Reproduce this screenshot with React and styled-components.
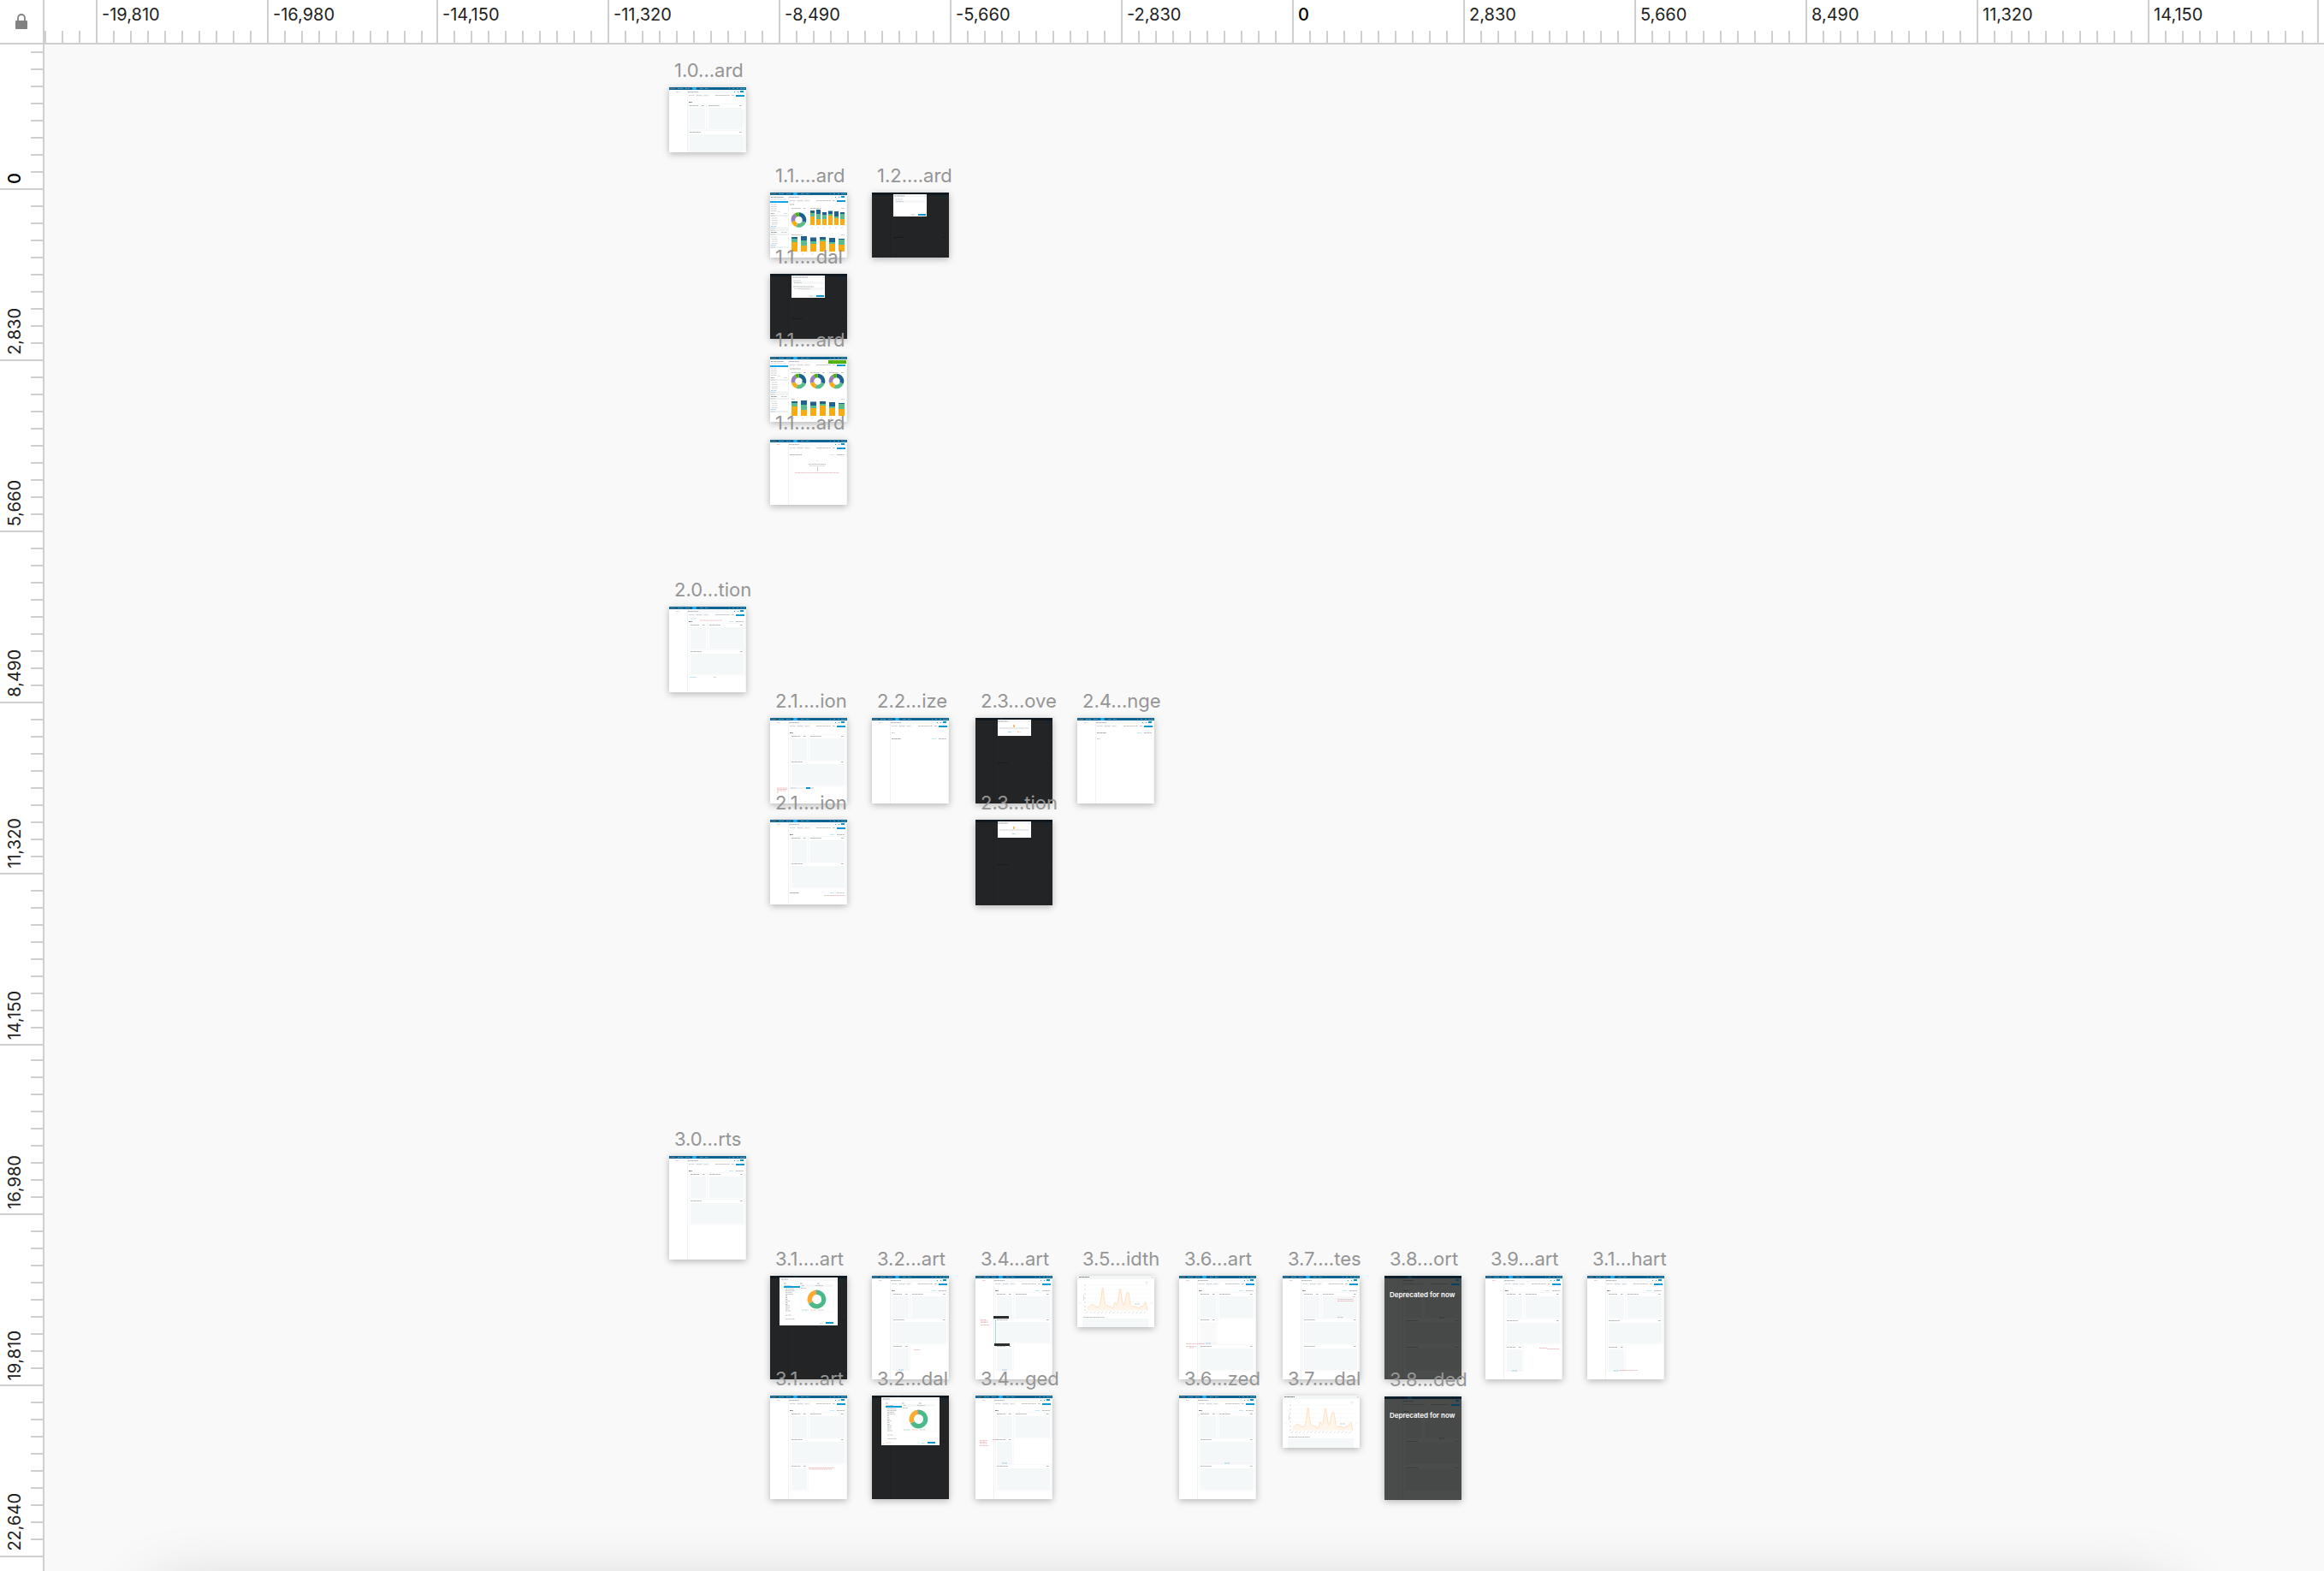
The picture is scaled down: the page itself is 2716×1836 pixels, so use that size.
import React from "react";
import styled, { createGlobalStyle } from "styled-components";

const GlobalStyle = createGlobalStyle`
  * { box-sizing: border-box; }
  body {
    margin: 0;
    background: #f9f9f9;
    font-family: Inter, "Liberation Sans", sans-serif;
  }
`;

const LINE = "#cfcfcf";

const Workspace = styled.div`
  display: grid;
  grid-template: 52px 1fr / 52px 1fr;
  height: 100vh;
  overflow: hidden;
`;

const LockButton = styled.button`
  display: flex;
  align-items: center;
  justify-content: center;
  padding: 0;
  border: 0;
  border-right: 2px solid ${LINE};
  border-bottom: 2px solid ${LINE};
  background: #fff;
  color: #828282;
`;

const RulerTop = styled.div`
  display: flex;
  overflow: hidden;
  background: #fff;
  border-bottom: 2px solid ${LINE};
`;

const RulerLeft = styled.div`
  display: flex;
  flex-direction: column;
  overflow: hidden;
  background: #fff;
  border-right: 2px solid ${LINE};
`;

const Mark = styled.span`
  font-size: 20px;
  line-height: 34px;
  white-space: nowrap;
  color: ${(p) => (p.$origin ? "#000" : "#222")};
  font-weight: ${(p) => (p.$origin ? 500 : 400)};
`;

const TopSegment = styled.div`
  flex: 0 0 ${(p) => p.$size}px;
  padding-left: 7px;
  background:
    linear-gradient(${LINE}, ${LINE}) 0 0 / ${(p) => (p.$major ? 2 : 0)}px 100% no-repeat,
    linear-gradient(to right, ${LINE} 2px, transparent 2px) 0 100% / 20px 14px repeat-x;
`;

const LeftSegment = styled.div`
  flex: 0 0 ${(p) => p.$size}px;
  display: flex;
  align-items: flex-end;
  padding-bottom: 7px;
  background:
    linear-gradient(${LINE}, ${LINE}) 0 100% / 100% 2px no-repeat,
    linear-gradient(to top, ${LINE} 2px, transparent 2px) 100% 100% / 14px 20px repeat-y;
`;

const VerticalMark = styled(Mark)`
  writing-mode: vertical-rl;
  rotate: 180deg;
`;

const Canvas = styled.main`
  position: relative;
  overflow: hidden;
  background: #f9f9f9;
`;

const DockShadow = styled.div`
  position: absolute;
  left: 128px;
  right: 180px;
  top: calc(100% + 24px);
  height: 100px;
  box-shadow: 0 0 80px rgba(0, 0, 0, 0.2);
`;

const Board = styled.figure`
  position: absolute;
  left: ${(p) => p.$x}px;
  top: ${(p) => p.$y}px;
  margin: 0;
  width: 90px;
`;

const BoardName = styled.figcaption`
  padding-left: 6px;
  margin-bottom: 7px;
  font-size: 22px;
  line-height: 26px;
  white-space: nowrap;
  color: #959595;
`;

const Art = styled.div`
  display: grid;
  height: ${(p) => p.$h}px;
  background: ${(p) => p.$fill};
  box-shadow: 0 2px 8px rgba(0, 0, 0, 0.28);
  > * { grid-area: 1 / 1; }
`;

const Notice = styled.strong`
  padding: 17px 0 0 6px;
  font-size: 8px;
  line-height: 10px;
  font-weight: 600;
  white-space: nowrap;
  color: #fff;
`;

/* ---------- miniature artwork ---------- */

/* A line of copy too small to read: a thin broken stroke. */
const Txt = ({ x, y, w, c = "#8d9296", o = 0.7 }) => (
  <line x1={x} x2={x + w} y1={y} y2={y} stroke={c} strokeWidth="1" strokeDasharray="2 .4 1.4 .3" opacity={o * 0.68} />
);
const Box = ({ x, y, w, h, c = "#f4f8f9" }) => <rect x={x} y={y} width={w} height={h} fill={c} />;

function Chrome({ h, sidebar = true }) {
  return (
    <g>
      <Box x={0} y={0} w={90} h={3} c="#0b6391" />
      <Box x={27} y={0} w={5} h={3} c="#0aa2ea" />
      <Box x={1} y={1} w={3} h={1} c="#4a7793" />
      <Box x={4} y={1} w={3} h={1} c="#8a6a62" />
      {[[10, 6], [19, 5], [28, 3], [36, 4], [42, 4], [70, 1], [74, 2], [79, 2], [83, 6]].map(([x, w]) => (
        <Txt key={x} x={x} y={1.5} w={w} c="#b6d8e8" o={0.65} />
      ))}
      <Box x={21} y={3} w={69} h={4} c="#f6f8f9" />
      <Box x={21} y={3} w={1} h={h - 3} c="#f0f3f4" />
      <Box x={89} y={3} w={1} h={h - 3} c="#f3f6f7" />
      <Txt x={22} y={5.5} w={12} c="#6d7275" />
      <Box x={76} y={5} w={1} h={1} c="#2da7dc" />
      <Box x={80} y={5} w={1} h={1} c="#2da7dc" />
      <Box x={83} y={4} w={4} h={2} c="#0a93d2" />
      <Txt x={23} y={9.5} w={7} o={0.6} />
      <Box x={31} y={8} w={16} h={3} c="#f5f6f7" />
      <Txt x={32} y={9.5} w={6} o={0.5} />
      <Txt x={41} y={9.5} w={4} o={0.45} />
      <Txt x={54} y={9.5} w={17} o={0.8} />
      <Txt x={73} y={9.5} w={3} o={0.8} />
      <Box x={78} y={9} w={10} h={2} c="#0a97d6" />
      {sidebar && <Txt x={8} y={5.5} w={4} c="#d98a90" o={0.7} />}
    </g>
  );
}

function Panel({ x, y, w, h, tools, c }) {
  return (
    <g>
      <Txt x={x} y={y - 2.5} w={w > 20 ? 13 : 10} c="#55595c" o={0.65} />
      <Txt x={x + w - 4} y={y - 2.5} w={3} c="#55595c" o={0.65} />
      <rect x={x - 1.5} y={y - 4.5} width={w + 3} height={h + 5.5} fill="none" stroke="#f4f6f7" strokeWidth=".6" />
      <Box x={x} y={y} w={w} h={h} c={c} />
      {tools && (
        <g>
          <Txt x={x} y={y + h + 1} w={w} c="#b9bec1" o={0.35} />
          <Txt x={x + w / 2 - 3} y={y + h + 1} w={6} c="#35a5d5" o={0.7} />
        </g>
      )}
    </g>
  );
}

const A = { x: 25, y: 24, w: 18, h: 25 };
const B = { x: 47, y: 24, w: 40, h: 25 };
const WIDE = (y, h = 25) => ({ x: 25, y, w: 62, h });
const SMALL = (y, h = 25, extra) => ({ x: 25, y, w: 18, h, ...extra });

function Page({ h, panels, icons = true, notes = [], extra }) {
  return (
    <g>
      <Chrome h={h} />
      <Txt x={23} y={17.5} w={4} c="#3b3f42" o={1} />
      {icons && (
        <g>
          <Txt x={70} y={17.5} w={5} c="#58b7de" o={0.6} />
          <Txt x={78} y={17.5} w={9} c="#6b7073" />
        </g>
      )}
      {panels.map((p, i) => <Panel key={i} {...p} />)}
      {notes.map(([x, y, w], i) => <Txt key={i} x={x} y={y} w={w} c="#d9777c" o={0.65} />)}
      {extra}
    </g>
  );
}

function arc(cx, cy, r, from, to) {
  const p = (a) => {
    const t = ((a - 90) * Math.PI) / 180;
    return `${cx + r * Math.cos(t)} ${cy + r * Math.sin(t)}`;
  };
  return `M${p(from)}A${r} ${r} 0 ${to - from > 180 ? 1 : 0} 1 ${p(to)}`;
}

const Donut = ({ cx, cy, r, width, slices }) => (
  <g fill="none" strokeWidth={width}>
    {slices.map(([from, to, color]) => (
      <path key={from} d={arc(cx, cy, r, from, to)} stroke={color} />
    ))}
  </g>
);

const FIVE = [[0, 110, "#20628f"], [110, 200, "#59bd8d"], [200, 255, "#fbab12"], [255, 328, "#9681b8"], [328, 360, "#4cb400"]];
const THREE = [[0, 242, "#4cb98a"], [242, 354, "#fbab31"], [354, 360, "#56708a"]];

const Bars = ({ xs, w, base, tops }) => (
  <g>
    {xs.map((x, i) => {
      const [n, g, o] = tops[i];
      return (
        <g key={x}>
          <Box x={x} y={n} w={w} h={g - n} c="#20628f" />
          <Box x={x} y={g} w={w} h={o - g} c="#59bd8d" />
          <Box x={x} y={o} w={w} h={base - o} c="#fbab12" />
          <line x1={x + 1} y1={base + 4} x2={x + 3} y2={base + 2} stroke="#c4c4c4" strokeWidth=".6" />
        </g>
      );
    })}
  </g>
);

const LOWER = {
  xs: [25, 36, 47, 58, 69, 80],
  w: 7,
  base: 69,
  tops: [[52, 54, 58], [51, 56, 62], [52.5, 57, 60], [52, 55, 57], [53, 58, 60], [54, 55, 61]],
};
const UPPER = {
  xs: [47, 54, 61, 68, 75, 82],
  w: 5,
  base: 38,
  tops: [[21, 24, 28], [20, 25, 31], [23, 26, 31], [21.5, 25, 27], [22, 28, 30], [23, 25, 31]],
};

function Dashboard({ variant }) {
  const three = variant === "three";
  return (
    <g>
      <Chrome h={76} sidebar={false} />
      <Txt x={1} y={5.5} w={15} c="#55595c" o={0.8} />
      <Txt x={1} y={8} w={18} o={0.6} />
      <Box x={0} y={10} w={21} h={2} c="#10a3e6" />
      {[14, 16.5, 19, 21.5].map((y) => <Txt key={y} x={1} y={y} w={7} o={0.7} />)}
      <Txt x={9} y={22.5} w={3} o={0.5} />
      <Txt x={1} y={24.5} w={4} c="#55595c" o={0.8} />
      <Txt x={16} y={24.5} w={4} o={0.5} />
      {[27, 41.5, 44, 49, 64].map((y) => (
        <g key={y}>
          <Box x={0} y={y - 1} w={21} h={2} c="#eef1f2" />
          <Txt x={1} y={y} w={5} o={0.6} />
        </g>
      ))}
      <Txt x={1} y={46.5} w={7} c="#55595c" o={0.9} />
      <Txt x={13} y={46.5} w={7} o={0.7} />
      <Txt x={1} y={52} w={7} o={0.6} />
      {[30, 32.5, 35, 37, 54.5, 57, 59.5].map((y) => <Txt key={y} x={2} y={y} w={7} o={0.6} />)}
      {[39.5, 61.5].map((y) => <Txt key={y} x={1} y={y} w={6} c="#35a5d5" />)}
      <Txt x={23} y={14} w={three ? 13 : 5} c="#55595c" />
      {three ? (
        <g>
          {[25, 47, 69].map((x) => (
            <g key={x}>
              <Txt x={x} y={18.5} w={11} o={0.8} />
              <Txt x={x + 14} y={18.5} w={3} o={0.9} />
            </g>
          ))}
          {[33.5, 55.5, 77.5].map((cx) => <Donut key={cx} cx={cx} cy={28.5} r={6.5} width={4.6} slices={FIVE} />)}
          <Box x={68} y={4} w={21} h={4} c="#4bae00" />
          <Txt x={72} y={6} w={14} c="#a4d680" o={0.5} />
        </g>
      ) : (
        <g>
          <Txt x={25} y={18.5} w={11} o={0.8} />
          <Txt x={39} y={18.5} w={3} />
          <Txt x={47} y={18.5} w={13} o={0.8} />
          <Txt x={83} y={18.5} w={4} />
          <Donut cx={33.5} cy={32} r={6.5} width={4.6} slices={FIVE} />
          <Bars {...UPPER} />
        </g>
      )}
      <Txt x={25} y={49.5} w={three ? 4 : 13} o={0.8} />
      <Txt x={83} y={49.5} w={4} />
      <Bars {...LOWER} />
    </g>
  );
}

const Backdrop = ({ h }) => (
  <g>
    <Box x={0} y={0} w={90} h={3} c="#10191f" />
    <Box x={27} y={0} w={5} h={3} c="#0c2431" />
    <Box x={21} y={3} w={1} h={h - 3} c="#1f2122" />
    <Box x={83} y={4} w={4} h={2} c="#0b2b3b" />
    <Txt x={25} y={52.5} w={13} c="#0d0e0f" />
    <Txt x={83} y={52.5} w={3} c="#0d0e0f" />
  </g>
);

function Modal({ variant, h }) {
  const alert = variant === "alert" || variant === "confirm";
  return (
    <g>
      <Backdrop h={h} />
      <Box x={alert ? 26 : 25} y={2} w={39} h={alert ? 19 : 26} c="#fff" />
      <Box x={alert ? 26 : 25} y={2} w={39} h={3} c="#f4f6f7" />
      <Txt x={26} y={4} w={variant === "create" ? 18 : 12} c="#55595c" />
      <Txt x={62} y={4} w={1} />
      {alert ? (
        <g>
          <Box x={44} y={8} w={2} h={3} c="#f9be72" />
          <Txt x={28} y={12} w={34} />
          <Txt x={variant === "confirm" ? 38 : 43} y={16.5} w={4} c="#35a5d5" o={0.7} />
          {variant === "confirm" && <Txt x={49} y={16.5} w={4} c="#f09a62" o={0.7} />}
        </g>
      ) : (
        <g>
          <Txt x={27} y={8} w={9} />
          <Box x={26} y={9} w={37} h={3} c="#f4f6f7" />
          <Txt x={28} y={10.5} w={9} o={0.6} />
          {variant === "create" && (
            <g>
              <Txt x={27} y={15} w={24} c="#55595c" o={0.6} />
              <Box x={33} y={16} w={30} h={3} c="#f4f6f7" />
              <Txt x={28} y={17.5} w={19} o={0.5} />
            </g>
          )}
          {variant === "edit" && <Txt x={26} y={26.5} w={2} c="#f0b070" o={1} />}
          <Box x={44} y={25} w={8} h={2} c="#f4f6f7" />
          <Txt x={46} y={26} w={4} />
          <Box x={54} y={25} w={9} h={2} c="#0a93d2" />
        </g>
      )}
    </g>
  );
}

function ChartModal({ note }) {
  return (
    <g>
      <Backdrop h={121} />
      <Box x={11} y={2} w={68} h={56} c="#fff" />
      <Box x={11} y={2} w={68} h={4} c="#f6f8f9" />
      <Txt x={13} y={4} w={8} c="#55595c" />
      {[16, 35, 55].map((x) => <Txt key={x} x={x} y={9} w={3} c="#55595c" />)}
      <Box x={16} y={12} w={19} h={2} c="#0e9ddb" />
      <Box x={36} y={10} w={38} h={3} c="#f4f6f7" />
      <Txt x={17} y={11.5} w={8} o={0.7} />
      <Txt x={37} y={11.5} w={3} />
      <Txt x={53} y={11.5} w={9} o={0.7} />
      <Txt x={36} y={14.5} w={6} o={0.8} />
      {[[15.5, 10], [17.5, 11], [19.5, 8], [21.5, 9], [23.5, 2], [25.5, 2], [27.5, 3], [29.5, 5], [31.5, 3], [33.5, 3], [35, 5], [37, 5], [39, 4], [41, 6]].map(([y, w]) => (
        <Txt key={y} x={18} y={y} w={w} o={0.8} />
      ))}
      <rect x={36} y={16} width={38} height={26} fill="none" stroke="#f1f4f5" strokeWidth=".6" />
      <Donut cx={54.5} cy={27.5} r={8.2} width={5.4} slices={THREE} />
      <Txt x={37} y={40} w={8} c="#59a98d" o={0.6} />
      <Txt x={47} y={40} w={7} c="#d39a4d" o={0.6} />
      <Txt x={56} y={40} w={7} o={0.6} />
      <Txt x={18} y={46} w={7} />
      <Txt x={18} y={50.5} w={11} />
      <Txt x={58} y={55.5} w={4} c="#35a5d5" o={0.5} />
      <Box x={65} y={54} w={9} h={2} c="#0a93d2" />
      {note && (
        <g>
          <Txt x={13} y={56.5} w={2} c="#f0b070" />
          <Txt x={16} y={55} w={7} c="#e3a3a6" o={0.6} />
        </g>
      )}
    </g>
  );
}

const CURVE =
  "M12 37C14 37 15 33.5 17.5 33.5S20 36 22 36.5S26 38 27.5 29S29 14 29.7 14S31.5 34 33.5 34.5S38 35.5 39.5 37S42 39 43 33.5S45 34.5 46.5 33.5S49 15 50 15S52.5 34 54 34.5S57 19 59 19S61 32 62.5 34.5S67 36 68.5 36S71 38.5 73 37.5S75 33 76 35.5S78.5 31 79.5 31S81 38 82 40.5";

function LineChart({ h }) {
  return (
    <g>
      <Box x={0} y={0} w={90} h={4} c="#f4f7f8" />
      <Txt x={2} y={1.5} w={12} c="#45494c" o={1} />
      <Txt x={87} y={1.5} w={1.5} />
      <circle cx={81} cy={8} r={1.2} fill="none" stroke="#d3d6d8" strokeWidth=".5" />
      {[11, 16, 21, 26, 31, 36, 40].map((y) => (
        <g key={y}>
          <line x1={12} x2={83} y1={y} y2={y} stroke="#eff0f1" strokeWidth=".5" />
          <Txt x={8} y={y} w={2} o={0.5} />
        </g>
      ))}
      <line x1={7.5} x2={7.5} y1={22} y2={29} stroke="#d3d5d6" strokeWidth=".7" />
      <path d={`${CURVE}H12Z`} fill="#fff5ea" />
      <path d={CURVE} fill="none" stroke="#fddcb8" strokeWidth=".9" />
      {Array.from({ length: 16 }, (_, i) => (
        <line key={i} x1={10 + i * 4.5} y1={44} x2={12.5 + i * 4.5} y2={41.5} stroke="#d0d2d3" strokeWidth=".7" />
      ))}
      <Box x={66} y={31} w={10} h={4} c="#fff" />
      <Txt x={67} y={33} w={6} />
      <circle cx={3} cy={32} r={1} fill="none" stroke="#e8eaeb" strokeWidth=".5" />
      <circle cx={87} cy={32} r={1} fill="none" stroke="#e8eaeb" strokeWidth=".5" />
      <Txt x={7} y={48.5} w={25} c="#77797b" />
      <Box x={6} y={50} w={77} h={h - 50} />
    </g>
  );
}

const Deprecated = () => (
  <g>
    <Box x={0} y={0} w={90} h={3} c="#0a1f2b" />
    <Box x={27} y={0} w={5} h={3} c="#0a3145" />
    <Box x={21} y={3} w={1} h={118} c="#454646" />
    <Txt x={22} y={5.5} w={12} c="#1d1e1f" />
    <Txt x={23} y={9.5} w={24} c="#2b2c2c" />
    <Txt x={54} y={9.5} w={21} c="#242525" />
    <Box x={83} y={4} w={4} h={2} c="#08415c" />
    <Box x={78} y={9} w={10} h={2} c="#08415c" />
    <Txt x={23} y={17.5} w={5} c="#161717" />
    {[A, B, WIDE(54), WIDE(85)].map((p) => <Box key={`${p.x}-${p.y}`} x={p.x} y={p.y} w={p.w} h={p.h} c="#474848" />)}
    {[52.5, 83.5].map((y) => (
      <g key={y}>
        <Txt x={25} y={y} w={14} c="#232424" />
        <Txt x={83} y={y} w={3} c="#232424" />
      </g>
    ))}
    <Txt x={64} y={49} w={6} c="#1c1d1d" />
  </g>
);

const EmptySection = () => (
  <g>
    <Chrome h={76} />
    <Txt x={23} y={17.5} w={14} c="#55595c" />
    <Txt x={70} y={17.5} w={5} o={0.4} />
    <Txt x={78} y={17.5} w={9} c="#6b7073" />
    <Txt x={54} y={24.5} w={2} o={0.3} />
    <Txt x={45} y={28.5} w={20} o={0.8} />
    <Txt x={46} y={30.5} w={18} o={0.5} />
    <line x1={55.5} x2={55.5} y1={31.5} y2={37} stroke="#e3b3b7" strokeWidth=".8" />
    <Txt x={29} y={38.5} w={52} c="#d9888d" o={0.7} />
  </g>
);

const Sections = ({ rows }) => (
  <g>
    <Chrome h={100} />
    {rows.map(([y, w, bold]) => (
      <g key={y}>
        <Txt x={23} y={y} w={w} c={bold ? "#45494c" : "#8d9296"} />
        {bold && (
          <g>
            <Txt x={70} y={y} w={5} c="#58b7de" o={0.6} />
            <Txt x={78} y={y} w={9} c="#6b7073" />
          </g>
        )}
      </g>
    ))}
  </g>
);

const DARK = "#222426";

const boards = [
  { name: "1.0...ard", x: 782, y: 102, h: 76, art: <Page h={76} icons={false} panels={[{ ...A, x: 24 }, { ...B, x: 46 }, { ...WIDE(55, 21), x: 24 }]} /> },
  { name: "1.1....ard", x: 900, y: 225, h: 76, art: <Dashboard /> },
  { name: "1.2....ard", x: 1019, y: 225, h: 76, fill: DARK, art: <Modal variant="edit" h={76} /> },
  { name: "1.1....dal", x: 900, y: 320, h: 76, fill: DARK, art: <Modal variant="create" h={76} /> },
  { name: "1.1....ard", x: 900, y: 417, h: 76, art: <Dashboard variant="three" /> },
  { name: "1.1....ard", x: 900, y: 514, h: 76, art: <EmptySection /> },

  {
    name: "2.0...tion", x: 782, y: 709, h: 100,
    art: <Page h={100} notes={[[36, 16, 26], [52, 82.5, 3]]} panels={[A, B, WIDE(55, 24)]}
      extra={<g><Txt x={25} y={14} w={7} c="#58b7de" o={0.6} /><Txt x={24} y={82.5} w={8} c="#58b7de" o={0.6} /></g>} />,
  },
  {
    name: "2.1....ion", x: 900, y: 839, h: 100,
    art: <Page h={100} icons={false} notes={[[8, 82, 12], [8, 83.5, 12], [8, 85, 11], [8, 87, 2]]} panels={[A, B, WIDE(54)]}
      extra={<g><Box x={23} y={81} w={28} h={2} c="#edf1f3" /><Txt x={24} y={82} w={6} o={0.5} /><Box x={42} y={81} w={5} h={2} c="#0a93d2" /><Txt x={48} y={82} w={3} o={0.5} /></g>} />,
  },
  { name: "2.2...ize", x: 1019, y: 839, h: 100, art: <Sections rows={[[17.5, 4], [24.5, 11, true]]} /> },
  { name: "2.3...ove", x: 1140, y: 839, h: 100, fill: DARK, art: <Modal variant="confirm" h={100} /> },
  { name: "2.4...nge", x: 1259, y: 839, h: 100, art: <Sections rows={[[17.5, 11, true], [24.5, 4]]} /> },
  {
    name: "2.1....ion", x: 900, y: 958, h: 99,
    art: <Page h={99} notes={[[63, 88.5, 25]]} panels={[A, B, WIDE(54)]}
      extra={<g><Txt x={23} y={85.5} w={11} c="#45494c" /><Txt x={70} y={85.5} w={5} c="#58b7de" o={0.6} /><Txt x={78} y={85.5} w={9} /></g>} />,
  },
  { name: "2.3...tion", x: 1140, y: 958, h: 100, fill: DARK, art: <Modal variant="alert" h={100} /> },

  { name: "3.0...rts", x: 782, y: 1351, h: 121, art: <Page h={121} panels={[A, B, WIDE(55, 24)]} /> },
  { name: "3.1....art", x: 900, y: 1491, h: 121, fill: DARK, art: <ChartModal /> },
  { name: "3.2...art", x: 1019, y: 1491, h: 121, art: <Page h={121} notes={[[49, 86.5, 7]]} panels={[A, B, WIDE(54), SMALL(85, 24, { tools: true })]} /> },
  {
    name: "3.4...art", x: 1140, y: 1491, h: 121,
    art: <Page h={121} notes={[[6, 51.5, 7], [6, 53, 9], [6, 54.5, 8], [6, 57.5, 10]]} panels={[A, B, WIDE(54, 24), SMALL(85, 24, { tools: true })]}
      extra={<g><Box x={21} y={47} w={18} h={3} c="#2b2d2f" /><Box x={23} y={51} w={1} h={28} c="#9ed6ec" /><Box x={22} y={79} w={18} h={3} c="#2b2d2f" /></g>} />,
  },
  { name: "3.5...idth", x: 1259, y: 1491, h: 60, art: <LineChart h={60} /> },
  { name: "3.6...art", x: 1378, y: 1491, h: 121, art: <Page h={121} notes={[[8, 79.5, 22], [8, 82.5, 12], [12, 84, 5]]} panels={[A, B, SMALL(54, 24, { tools: true, c: "#f9f9f9" }), WIDE(85)]} /> },
  { name: "3.7....tes", x: 1499, y: 1491, h: 121, art: <Page h={121} notes={[[64, 27.5, 19], [64, 29.5, 19], [82, 24.5, 3]]} panels={[A, B, WIDE(54), WIDE(85)]} extra={<Txt x={64} y={48.5} w={7} />} /> },
  { name: "3.8...ort", x: 1618, y: 1491, h: 121, fill: "#4a4b4b", notice: "Deprecated for now", art: <Deprecated /> },
  { name: "3.9...art", x: 1736, y: 1491, h: 121, art: <Page h={121} notes={[[63, 84.5, 9], [72, 85.5, 14]]} panels={[A, B, WIDE(55, 24), SMALL(86, 24, { tools: true })]} /> },
  { name: "3.1...hart", x: 1855, y: 1491, h: 121, art: <Page h={121} notes={[[38, 110.5, 21]]} panels={[A, B, WIDE(55, 24), SMALL(86, 24, { tools: true })]} /> },
  { name: "3.1....art", x: 900, y: 1631, h: 121, art: <Page h={121} notes={[[45, 84.5, 30], [46, 86, 26]]} panels={[A, B, WIDE(54), SMALL(85)]} /> },
  { name: "3.2...dal", x: 1019, y: 1631, h: 121, fill: DARK, art: <ChartModal note /> },
  { name: "3.4...ged", x: 1140, y: 1631, h: 121, art: <Page h={121} notes={[[20, 51.5, 6], [5, 52.5, 9], [5, 54.5, 8], [5, 56, 9], [5, 58.5, 10]]} panels={[A, B, SMALL(54, 24, { tools: true }), WIDE(85)]} /> },
  { name: "3.6...zed", x: 1378, y: 1631, h: 121, art: <Page h={121} panels={[A, B, { ...WIDE(54, 24), tools: true }, WIDE(85)]} /> },
  { name: "3.7....dal", x: 1499, y: 1631, h: 61, art: <LineChart h={61} /> },
  { name: "3.8...ded", x: 1618, y: 1632, h: 121, fill: "#4a4b4b", notice: "Deprecated for now", art: <Deprecated /> },
];

const topMarks = [
  [60], [200, "-19,810"], [198, "-16,980"], [200, "-14,150"], [200, "-11,320"], [200, "-8,490"],
  [200, "-5,660"], [200, "-2,830"], [200, "0"], [200, "2,830"], [200, "5,660"], [200, "8,490"],
  [200, "11,320"], [198, "14,150"], [200],
];

const leftMarks = [
  [170, "0"], [200, "2,830"], [200, "5,660"], [200, "8,490"], [200, "11,320"], [200, "14,150"],
  [198, "16,980"], [200, "19,810"], [200, "22,640"], [200],
];

/* Board positions are measured from the window's corner; the canvas starts after the ruler. */
const RULER = 52;
const NAME_HEIGHT = 33;

export default function App() {
  return (
    <Workspace>
      <GlobalStyle />
      <LockButton type="button" aria-label="Lock rulers">
        <svg width="14" height="18" viewBox="0 0 14 18" aria-hidden="true">
          <path d="M3 9V5a4 4 0 0 1 8 0v4" fill="none" stroke="currentColor" strokeWidth="1.8" />
          <rect y="8" width="14" height="10" rx="1" fill="currentColor" />
        </svg>
      </LockButton>
      <RulerTop>
        {topMarks.map(([size, label], i) => (
          <TopSegment key={i} $size={size} $major={i > 0}>
            {label && <Mark $origin={label === "0"}>{label}</Mark>}
          </TopSegment>
        ))}
      </RulerTop>
      <RulerLeft>
        {leftMarks.map(([size, label], i) => (
          <LeftSegment key={i} $size={size}>
            {label && <VerticalMark $origin={label === "0"}>{label}</VerticalMark>}
          </LeftSegment>
        ))}
      </RulerLeft>
      <Canvas>
        {boards.map((b, i) => (
          <Board key={i} $x={b.x - RULER} $y={b.y - RULER - NAME_HEIGHT}>
            <BoardName>{b.name}</BoardName>
            <Art $h={b.h} $fill={b.fill || "#fff"}>
              <svg width="90" height={b.h} viewBox={`0 0 90 ${b.h}`} aria-hidden="true">{b.art}</svg>
              {b.notice && <Notice>{b.notice}</Notice>}
            </Art>
          </Board>
        ))}
        <DockShadow />
      </Canvas>
    </Workspace>
  );
}
